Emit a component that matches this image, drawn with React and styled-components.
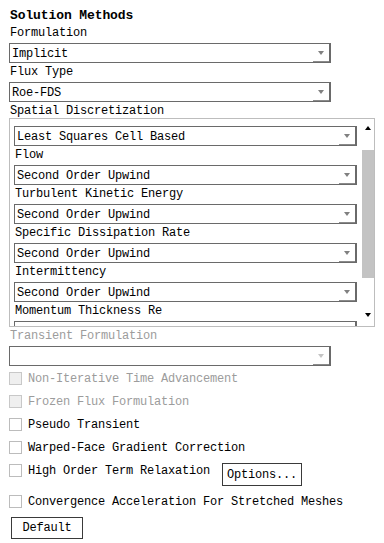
import React, { useLayoutEffect, useRef } from 'react';
import styled, { createGlobalStyle } from 'styled-components';

const GlobalStyle = createGlobalStyle`
  body {
    margin: 0;
    background: #fff;
  }
  * {
    box-sizing: border-box;
  }
`;

const schemes = [
  { label: 'Gradient', value: 'Least Squares Cell Based' },
  { label: 'Flow', value: 'Second Order Upwind' },
  { label: 'Turbulent Kinetic Energy', value: 'Second Order Upwind' },
  { label: 'Specific Dissipation Rate', value: 'Second Order Upwind' },
  { label: 'Intermittency', value: 'Second Order Upwind' },
  { label: 'Momentum Thickness Re', value: 'Second Order Upwind' },
];

const options = [
  { text: 'Non-Iterative Time Advancement', disabled: true },
  { text: 'Frozen Flux Formulation', disabled: true },
  { text: 'Pseudo Transient' },
  { text: 'Warped-Face Gradient Correction' },
];

const Select = ({ value, width, disabled }) => (
  <SelectBox $width={width}>
    <SelectValue>{value}</SelectValue>
    <SelectButton>
      <Caret $color={disabled ? '#c4c4c4' : '#808080'} />
    </SelectButton>
  </SelectBox>
);

const Check = ({ text, disabled }) => (
  <CheckRow $disabled={disabled}>
    <Box $disabled={disabled} />
    {text}
  </CheckRow>
);

const App = () => {
  const viewRef = useRef(null);

  useLayoutEffect(() => {
    if (viewRef.current) viewRef.current.scrollTop = 12;
  }, []);

  return (
    <>
      <GlobalStyle />
      <Panel>
        <Title>Solution Methods</Title>
        <Label>Formulation</Label>
        <Select value="Implicit" width={322} />
        <Label>Flux Type</Label>
        <Select value="Roe-FDS" width={322} />
        <Label $height={16}>Spatial Discretization</Label>

        <Pane>
          <PaneView ref={viewRef}>
            {schemes.map(s => (
              <React.Fragment key={s.label}>
                <Label>{s.label}</Label>
                <Select value={s.value} width={343} />
              </React.Fragment>
            ))}
          </PaneView>
          <ScrollBar>
            <ScrollButton>
              <Arrow $up />
            </ScrollButton>
            <Track>
              <Thumb $top={13} $size={128} />
            </Track>
            <ScrollButton $down>
              <Arrow />
            </ScrollButton>
          </ScrollBar>
        </Pane>

        <Label $muted>Transient Formulation</Label>
        <Select value="" width={322} disabled />

        <Checks>
          {options.map(o => (
            <Check key={o.text} text={o.text} disabled={o.disabled} />
          ))}
          <OptionRow>
            <Check text="High Order Term Relaxation" />
            <OptionsButton>Options...</OptionsButton>
          </OptionRow>
          <Check text="Convergence Acceleration For Stretched Meshes" />
        </Checks>

        <DefaultButton>Default</DefaultButton>
      </Panel>
    </>
  );
};

export default App;

const Panel = styled.div`
  width: 384px;
  height: 543px;
  padding: 8px 0 0 9px;
  display: flex;
  flex-direction: column;
  align-items: flex-start;
  overflow: hidden;
  font-family: "Liberation Mono", "DejaVu Sans Mono", monospace;
  font-size: 12px;
  letter-spacing: -0.2px;
  color: #000;
`;

const Title = styled.div`
  padding-left: 1px;
  font-size: 13px;
  font-weight: bold;
  letter-spacing: -0.1px;
  line-height: 16px;
`;

const Label = styled.div`
  height: ${p => p.$height || 19}px;
  line-height: 19px;
  padding-left: 1px;
  white-space: nowrap;
  color: ${p => (p.$muted ? '#9c9c9c' : '#000')};
`;

const SelectBox = styled.div`
  display: flex;
  flex-shrink: 0;
  width: ${p => p.$width}px;
  height: 20px;
  background: #fff;
  border: 1px solid #6a6a6a;
  border-right-width: 2px;
`;

const SelectValue = styled.span`
  flex: 1;
  padding: 1px 0 0 2px;
  line-height: 18px;
  white-space: nowrap;
  overflow: hidden;
`;

const SelectButton = styled.span`
  width: 16px;
  display: flex;
  align-items: center;
  justify-content: center;
  border-bottom: 1px solid #8a8a8a;
`;

const Caret = styled.span`
  width: 0;
  height: 0;
  border-left: 3.5px solid transparent;
  border-right: 3.5px solid transparent;
  border-top: 4px solid ${p => p.$color};
`;

const Pane = styled.div`
  display: flex;
  flex-shrink: 0;
  width: 366px;
  height: 209px;
  overflow: hidden;
  border: 1px solid #bdbdbd;
  background: #fff;
`;

const PaneView = styled.div`
  flex: 1;
  height: 100%;
  min-height: 0;
  overflow: hidden;
  padding: 0 4px;
`;

const ScrollBar = styled.div`
  width: 12px;
  display: flex;
  flex-direction: column;
`;

const ScrollButton = styled.div`
  height: 18px;
  display: flex;
  justify-content: center;
  align-items: ${p => (p.$down ? 'flex-start' : 'center')};
  padding-top: ${p => (p.$down ? 5 : 0)}px;
`;

const Arrow = styled.span`
  width: 0;
  height: 0;
  border-left: 3.5px solid transparent;
  border-right: 3.5px solid transparent;
  ${p => (p.$up ? 'border-bottom: 4px solid #000;' : 'border-top: 4px solid #000;')}
`;

const Track = styled.div`
  flex: 1;
  display: flex;
  flex-direction: column;
`;

const Thumb = styled.div`
  margin-top: ${p => p.$top}px;
  height: ${p => p.$size}px;
  background: #c3c3c3;
`;

const Checks = styled.div`
  display: flex;
  flex-direction: column;
  margin-top: 1px;
`;

const CheckRow = styled.label`
  display: flex;
  align-items: center;
  gap: 6px;
  height: 23px;
  white-space: nowrap;
  color: ${p => (p.$disabled ? '#9c9c9c' : '#000')};
`;

const Box = styled.span`
  width: 13px;
  height: 13px;
  flex-shrink: 0;
  border: 1px solid ${p => (p.$disabled ? '#c8c8c8' : '#bcbcbc')};
  background: ${p => (p.$disabled ? '#efefef' : '#fff')};
`;

const OptionRow = styled.div`
  display: flex;
  align-items: flex-start;
  margin-bottom: 4px;
`;

const Button = styled.button`
  font: inherit;
  letter-spacing: inherit;
  color: #000;
  background: #fff;
  border: 1px solid #3a3a3a;
  padding: 0;
  cursor: pointer;
`;

const OptionsButton = styled(Button)`
  width: 80px;
  height: 23px;
  margin: 4px 0 0 12px;
`;

const DefaultButton = styled(Button)`
  width: 72px;
  height: 22px;
  margin: 4px 0 0 2px;
`;
